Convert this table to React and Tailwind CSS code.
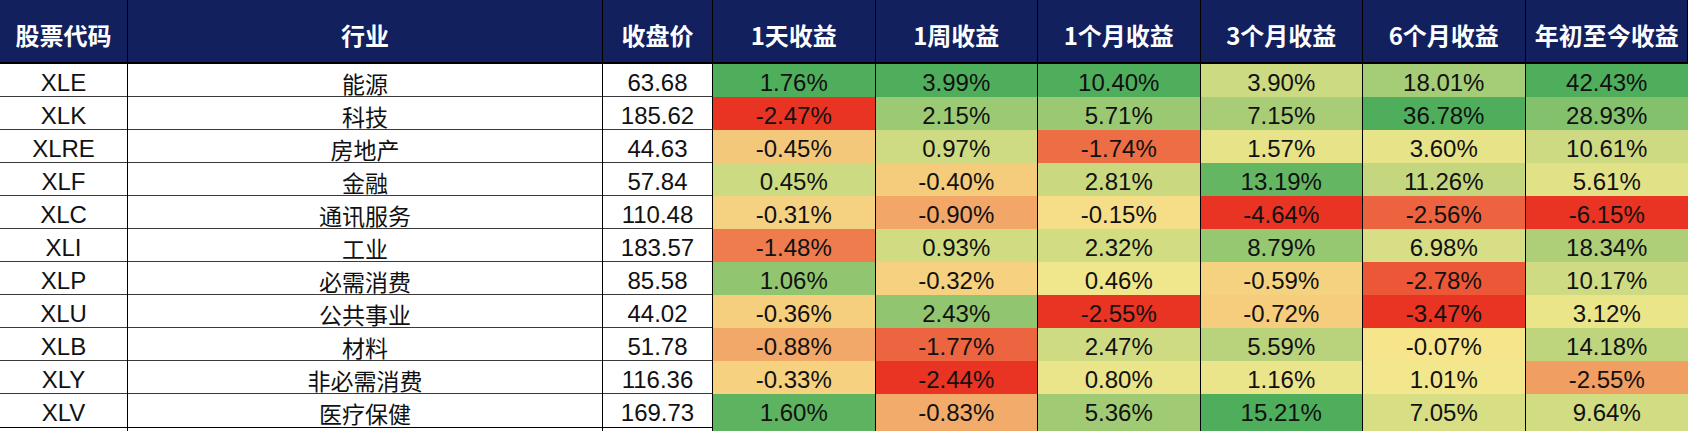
const headers = ['股票代码', '行业', '收盘价', '1天收益', '1周收益', '1个月收益', '3个月收益', '6个月收益', '年初至今收益'];

const rows = [
  ['XLE', '能源', '63.68', [1.76, 3.99, 10.4, 3.9, 18.01, 42.43]],
  ['XLK', '科技', '185.62', [-2.47, 2.15, 5.71, 7.15, 36.78, 28.93]],
  ['XLRE', '房地产', '44.63', [-0.45, 0.97, -1.74, 1.57, 3.6, 10.61]],
  ['XLF', '金融', '57.84', [0.45, -0.4, 2.81, 13.19, 11.26, 5.61]],
  ['XLC', '通讯服务', '110.48', [-0.31, -0.9, -0.15, -4.64, -2.56, -6.15]],
  ['XLI', '工业', '183.57', [-1.48, 0.93, 2.32, 8.79, 6.98, 18.34]],
  ['XLP', '必需消费', '85.58', [1.06, -0.32, 0.46, -0.59, -2.78, 10.17]],
  ['XLU', '公共事业', '44.02', [-0.36, 2.43, -2.55, -0.72, -3.47, 3.12]],
  ['XLB', '材料', '51.78', [-0.88, -1.77, 2.47, 5.59, -0.07, 14.18]],
  ['XLY', '非必需消费', '116.36', [-0.33, -2.44, 0.8, 1.16, 1.01, -2.55]],
  ['XLV', '医疗保健', '169.73', [1.6, -0.83, 5.36, 15.21, 7.05, 9.64]],
];

// excel style 3-colour scale, midpoint at 0, per column
const RED = [233, 51, 35];
const YELLOW = [247, 233, 142];
const GREEN = [79, 174, 92];

const mix = (a, b, t) => a.map((v, i) => Math.round(v + (b[i] - v) * t));

const colMin = [0, 1, 2, 3, 4, 5].map((c) => Math.min(...rows.map((r) => r[3][c])));
const colMax = [0, 1, 2, 3, 4, 5].map((c) => Math.max(...rows.map((r) => r[3][c])));

const cellColor = (v, c) => {
  const rgb = v >= 0 ? mix(YELLOW, GREEN, v / colMax[c]) : mix(YELLOW, RED, v / colMin[c]);
  return `rgb(${rgb[0]}, ${rgb[1]}, ${rgb[2]})`;
};

const gridCols = 'grid grid-cols-[128px_475px_110px_repeat(6,162.5px)]';

const App = () => {
  return (
    <div className="w-[1692px] h-[436px] bg-white overflow-hidden">
      <div className="w-[1688px] border-r border-b border-black">
        <div className={`${gridCols} h-[64px] bg-[#12205e] border-b-2 border-black`}>
          {headers.map((h, i) => (
            <div
              key={h}
              className={`flex items-center justify-center pt-2 text-white font-bold text-[24px] font-['Noto_Sans_CJK_SC',sans-serif] ${i < headers.length - 1 ? 'border-r border-black' : ''}`}
            >
              {h}
            </div>
          ))}
        </div>

        {rows.map(([code, sector, price, rets], ri) => (
          <div
            key={code}
            className={`${gridCols} h-[33px] text-[24px] text-[#111] font-['Liberation_Sans','Noto_Sans_CJK_SC',sans-serif] ${ri < rows.length - 1 ? 'border-b border-[#3a3a3a]' : ''}`}
          >
            <div className="flex items-center justify-center pt-px border-r border-black">{code}</div>
            <div className="flex items-center justify-center pt-px border-r border-black font-['Noto_Sans_CJK_SC',sans-serif] text-[23px]">
              {sector}
            </div>
            <div className="flex items-center justify-center pt-px border-r border-black">{price}</div>
            {rets.map((v, ci) => (
              <div
                key={ci}
                className={`flex items-center justify-center pt-px ${ci < 5 ? 'border-r border-black' : ''}`}
                style={{ backgroundColor: cellColor(v, ci) }}
              >
                {v.toFixed(2)}%
              </div>
            ))}
          </div>
        ))}
      </div>
    </div>
  );
};

export default App;
